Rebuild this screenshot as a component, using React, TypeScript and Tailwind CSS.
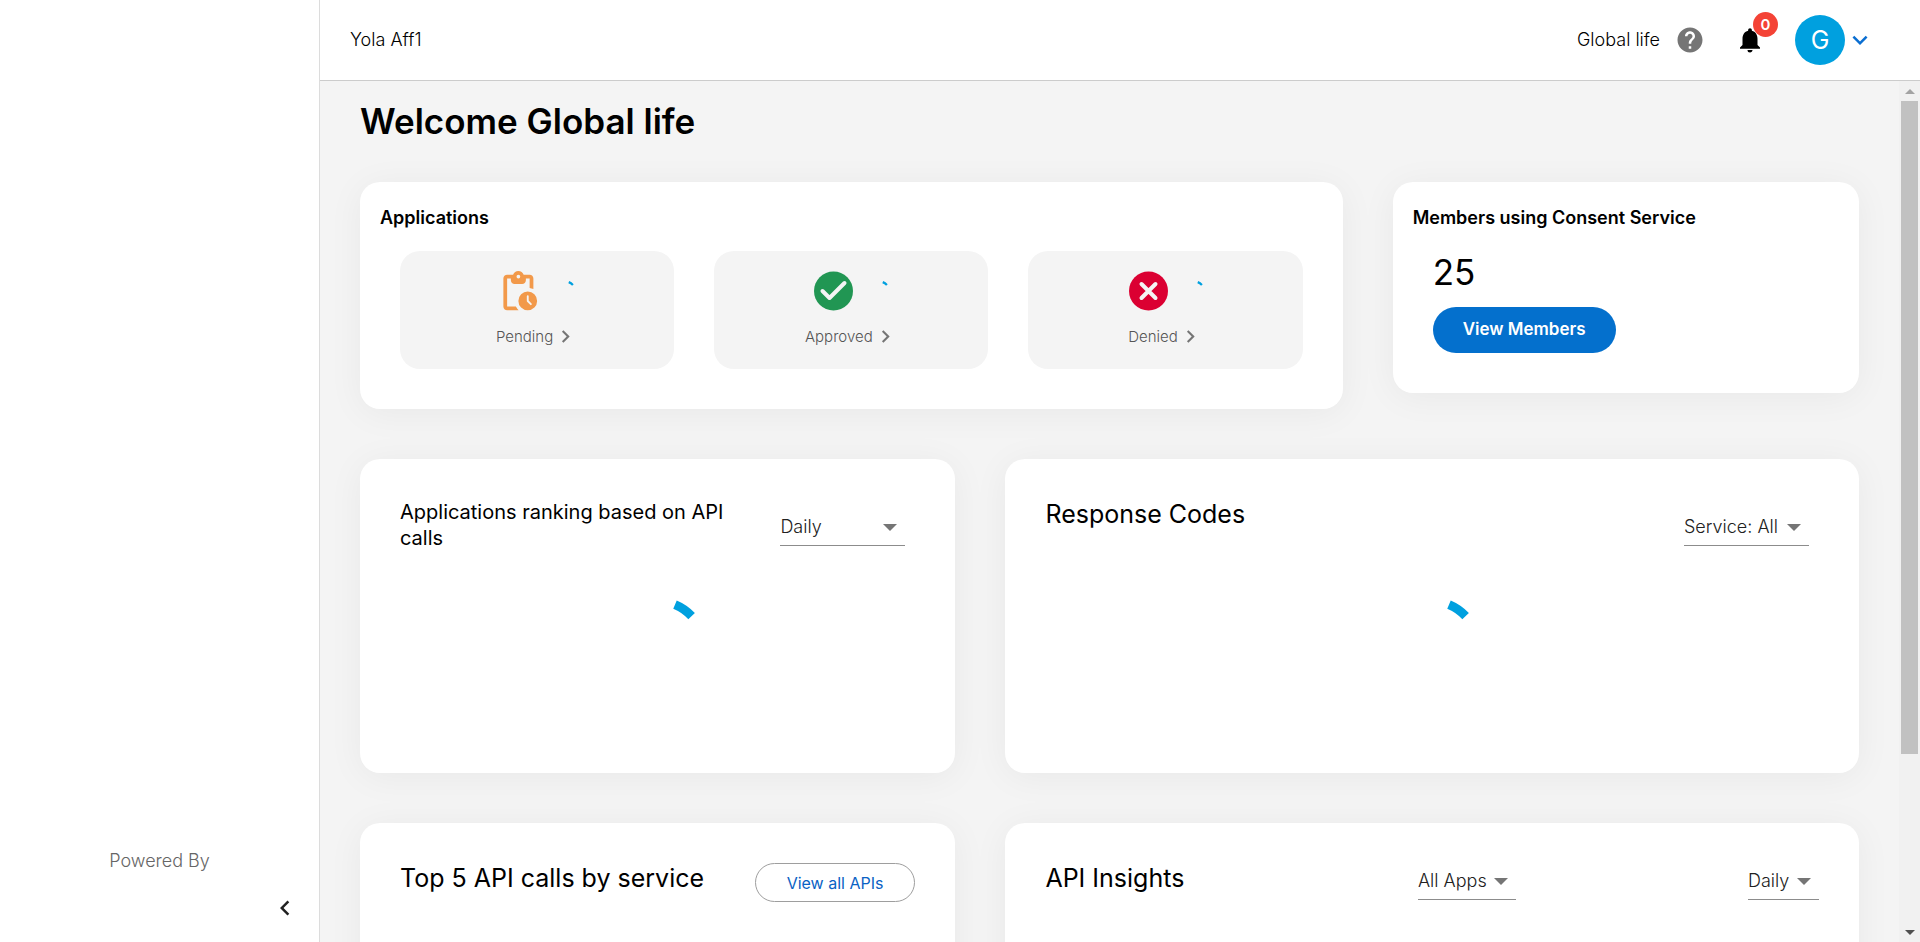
import type { ReactNode } from 'react'
import { MdHelp, MdNotifications, MdExpandMore, MdChevronLeft, MdChevronRight } from 'react-icons/md'

function Card({ className, children }: { className: string; children?: ReactNode }) {
  return (
    <section className={`rounded-[20px] bg-white shadow-[0_4px_36px_rgba(0,0,0,0.05)] ${className}`}>
      {children}
    </section>
  )
}

function Spinner({ className }: { className: string }) {
  return (
    <svg viewBox="0 0 100 100" className={`overflow-visible ${className}`} role="img" aria-label="Loading">
      <path d="M67 4.6 A48.5 48.5 0 0 1 83.6 16.1" fill="none" stroke="#00a0df" strokeWidth="9" />
    </svg>
  )
}

function Dropdown({ label, options, className }: { label: string; options: string[]; className: string }) {
  return (
    <div className={`relative border-b border-[#8c8c8c] ${className}`}>
      <select
        aria-label={label}
        className="block w-full appearance-none bg-transparent pb-1 text-lg leading-7 font-light text-[#212121] outline-none"
      >
        {options.map((o) => (
          <option key={o}>{o}</option>
        ))}
      </select>
      <svg viewBox="0 0 14 7" className="pointer-events-none absolute top-[11px] right-2 h-[7px] w-[14px]">
        <path d="M0 0h14l-7 7z" fill="#757575" />
      </svg>
    </div>
  )
}

function PendingIcon() {
  return (
    <svg viewBox="0.6 0 24 24" className="size-[45px]" fill="#f2994a">
      <path d="M17 12a5 5 0 1 0 0 10 5 5 0 0 0 0-10zm2 7.1a.5.5 0 0 1-.7 0l-1.65-1.65a.5.5 0 0 1-.15-.35V14.5a.5.5 0 0 1 1 0v2.29L19 18.4a.5.5 0 0 1 0 .7zM18 3h-3.18C14.4 1.84 13.3 1 12 1s-2.4.84-2.82 2H6c-1.1 0-2 .9-2 2v15c0 1.1.9 2 2 2h6.11a6.74 6.74 0 0 1-1.42-2H6V5h2v1c0 1.1.9 2 2 2h4c1.1 0 2-.9 2-2V5h2v5.08c.71.1 1.38.31 2 .6V5c0-1.1-.9-2-2-2zm-6 2a1 1 0 1 1 0-2 1 1 0 0 1 0 2z" />
    </svg>
  )
}

function ApprovedIcon() {
  return (
    <svg viewBox="0 0 45 45" className="size-[45px]">
      <circle cx="22.5" cy="22" r="19.5" fill="#219653" />
      <path d="M11.5 22l7 7L33.5 14" fill="none" stroke="#f4f4f4" strokeWidth="4" strokeLinecap="round" strokeLinejoin="round" />
    </svg>
  )
}

function DeniedIcon() {
  return (
    <svg viewBox="0 0 45 45" className="size-[45px]">
      <circle cx="22.5" cy="22" r="19.5" fill="#db0032" />
      <path d="M15.5 15l14 14M29.5 15l-14 14" fill="none" stroke="#f4f4f4" strokeWidth="4" strokeLinecap="round" />
    </svg>
  )
}

const tiles = [
  { name: 'Pending', icon: <PendingIcon /> },
  { name: 'Approved', icon: <ApprovedIcon /> },
  { name: 'Denied', icon: <DeniedIcon /> },
]

export default function App() {
  return (
    <div className="flex h-screen overflow-hidden bg-white font-['Inter',sans-serif] text-black">
      <aside className="flex w-80 shrink-0 flex-col justify-end border-r border-[#dcdcdc]">
        <p className="mb-[18px] text-center text-lg leading-7 font-light text-[#666666]">Powered By</p>
        <button type="button" aria-label="Collapse menu" className="mr-[19px] mb-[19px] self-end text-[#212121]">
          <MdChevronLeft size={30} />
        </button>
      </aside>

      <div className="flex min-w-0 flex-1 flex-col">
        <header className="flex h-[81px] shrink-0 items-center border-b border-[#cccccc] pr-[45px] pl-[30px] text-lg font-light">
          <span className="flex-1">Yola Aff1</span>
          <span>Global life</span>
          <button type="button" aria-label="Help" className="ml-[15px] text-[#757575]">
            <MdHelp size={30} />
          </button>
          <button type="button" aria-label="Notifications" className="relative ml-[30px]">
            <MdNotifications size={30} />
            <span className="absolute -top-[13px] left-[18px] flex size-[25px] items-center justify-center rounded-full bg-[#f44336] text-[15px] leading-none font-semibold text-white">
              0
            </span>
          </button>
          <button type="button" aria-label="Account menu" className="ml-[30px] flex items-center text-[#0a6ed1]">
            <span className="flex size-[50px] items-center justify-center rounded-full bg-[#00a0df] text-[25px] font-normal text-white">
              G
            </span>
            <MdExpandMore size={30} />
          </button>
        </header>

        <div className="flex min-h-0 flex-1">
          <main className="min-w-0 flex-1 overflow-hidden bg-[#f4f4f4] px-10 pt-5">
            <h1 className="text-[35px] leading-[41px] font-semibold">Welcome Global life</h1>

            <div className="mt-10 grid grid-cols-12 items-start gap-[50px]">
              <Card className="col-span-8 px-5 pt-5 pb-10">
                <h2 className="text-lg leading-[31px] font-semibold">Applications</h2>
                <div className="mt-[18px] grid grid-cols-3 gap-10 px-5">
                  {tiles.map((t) => (
                    <div key={t.name} className="flex flex-col items-center rounded-[20px] bg-[#f4f4f4] pt-[18px] pb-5">
                      <div className="flex items-center gap-[10px]">
                        {t.icon}
                        <Spinner className="mt-1 size-[25px]" />
                      </div>
                      <a href="#" className="mt-[10px] flex items-center text-[15px] leading-[25px] font-light text-[#555555]">
                        {t.name}
                        <MdChevronRight size={25} className="text-[#757575]" />
                      </a>
                    </div>
                  ))}
                </div>
              </Card>

              <Card className="col-span-4 px-5 pt-5 pb-10">
                <h2 className="text-lg leading-[31px] font-semibold">Members using Consent Service</h2>
                <div className="mt-[18px] px-5">
                  <p className="text-[35px] leading-[43px]">25</p>
                  <button
                    type="button"
                    className="mt-[13px] h-[46px] rounded-full bg-[#0470cd] px-[30px] text-[17px] font-semibold text-white"
                  >
                    View Members
                  </button>
                </div>
              </Card>

              <Card className="col-span-5 h-[314px] px-10 pt-10">
                <div className="flex items-start justify-between pr-[10px]">
                  <h2 className="w-[350px] text-xl leading-[26px]">Applications ranking based on API calls</h2>
                  <Dropdown label="Ranking period" options={['Daily']} className="mt-[14px] w-[125px]" />
                </div>
                <div className="mt-[49px] flex justify-center">
                  <Spinner className="size-[100px]" />
                </div>
              </Card>

              <Card className="col-span-7 h-[314px] px-10 pt-10">
                <div className="flex items-start justify-between pr-[10px]">
                  <h2 className="text-[25px] leading-[30px]">Response Codes</h2>
                  <Dropdown label="Service" options={['Service: All']} className="mt-[14px] w-[125px]" />
                </div>
                <div className="mt-[54px] flex justify-center">
                  <Spinner className="size-[100px]" />
                </div>
              </Card>

              <Card className="col-span-5 h-[314px] px-10 pt-10">
                <div className="flex items-start justify-between">
                  <h2 className="text-[25px] leading-[30px]">Top 5 API calls by service</h2>
                  <button
                    type="button"
                    className="h-[39px] rounded-full border border-[#9e9e9e] px-[31px] text-base text-[#0a62c4]"
                  >
                    View all APIs
                  </button>
                </div>
              </Card>

              <Card className="col-span-7 h-[314px] px-10 pt-10">
                <div className="flex items-start">
                  <h2 className="flex-1 text-[25px] leading-[30px]">API Insights</h2>
                  <div className="flex w-[401px] justify-between">
                    <Dropdown label="Application" options={['All Apps']} className="mt-1 w-[98px]" />
                    <Dropdown label="Insights period" options={['Daily']} className="mt-1 w-[71px]" />
                  </div>
                </div>
              </Card>
            </div>
          </main>

          <div aria-hidden="true" className="flex w-[21px] shrink-0 flex-col items-center bg-[#f1f1f1]">
            <div className="flex h-5 shrink-0 items-center">
              <svg viewBox="0 0 10 5" className="h-[5px] w-[10px]">
                <path d="M0 5h10L5 0z" fill="#a3a3a3" />
              </svg>
            </div>
            <div className="flex w-full flex-1 flex-col items-center">
              <div className="h-[79.5%] w-[17px] bg-[#c1c1c1]" />
            </div>
            <div className="flex h-5 shrink-0 items-center">
              <svg viewBox="0 0 10 5" className="h-[5px] w-[10px]">
                <path d="M0 0h10L5 5z" fill="#505050" />
              </svg>
            </div>
          </div>
        </div>
      </div>
    </div>
  )
}
